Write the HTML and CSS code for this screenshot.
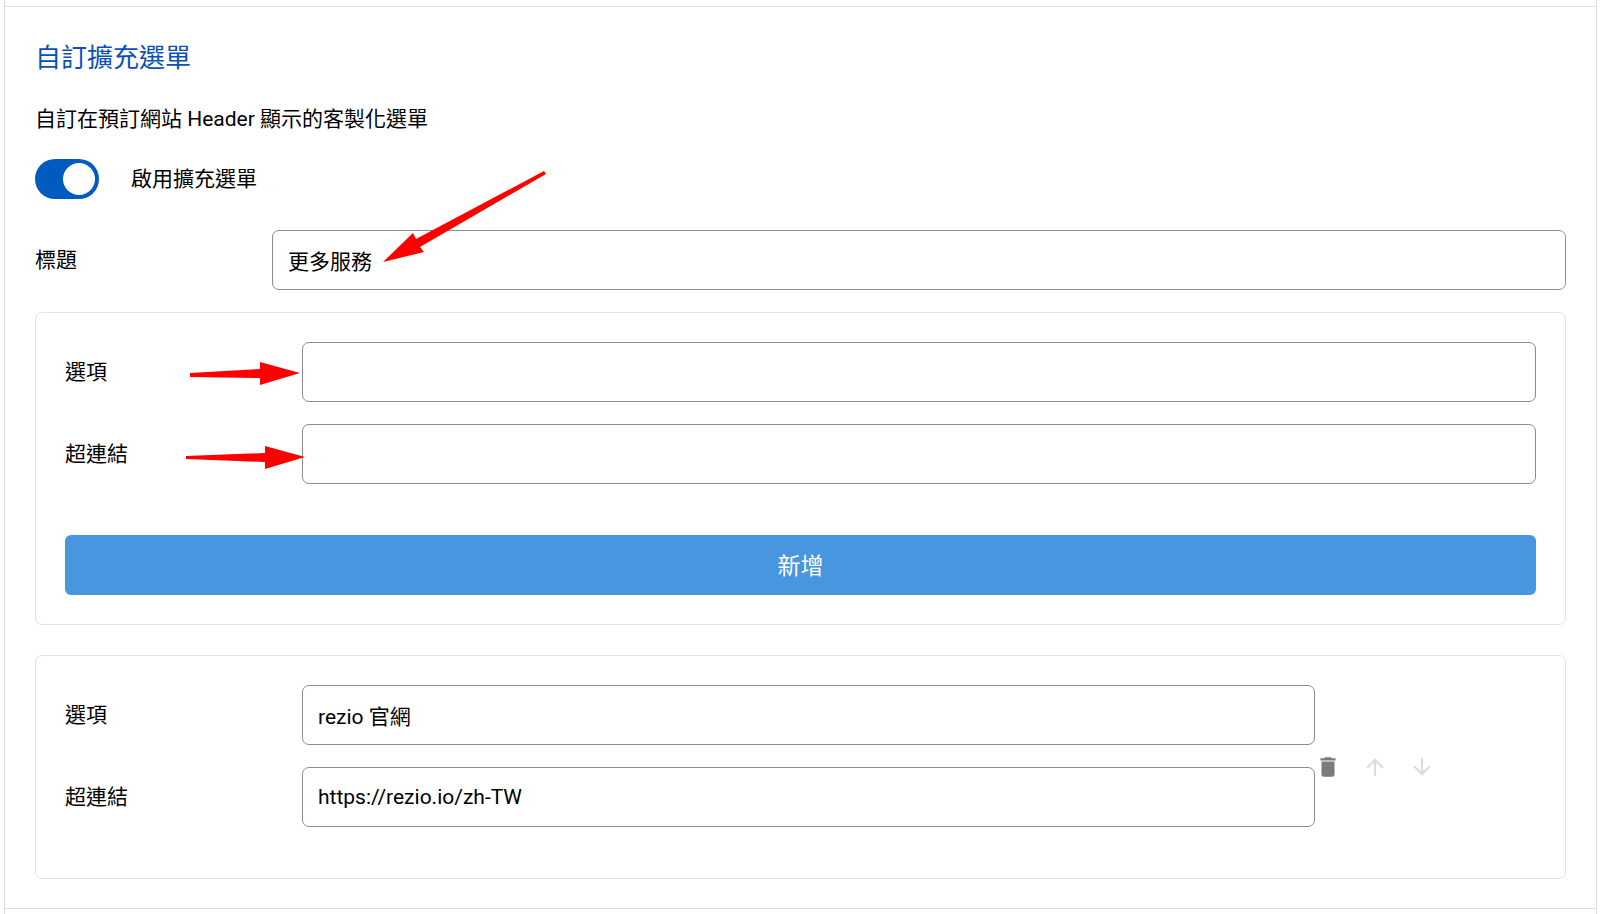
FILE: index.html
```
<!DOCTYPE html>
<html lang="zh-Hant-TW">
	<head>
		<meta charset="utf-8">
		<meta name="viewport" content="width=device-width, initial-scale=1">

		<title>自訂擴充選單</title>

		<link rel="stylesheet" href="styles.css">
	</head>
	<body>
	<main class="page">
		<section class="panel">
			<h2>自訂擴充選單</h2>
			<p class="intro">自訂在預訂網站 Header 顯示的客製化選單</p>

			<div class="toggle">
				<input type="checkbox" id="menu-enabled" class="switch" checked>
				<label for="menu-enabled">啟用擴充選單</label>
			</div>

			<div class="row">
				<label for="menu-title">標題</label>
				<input type="text" id="menu-title" value="更多服務">
				<svg class="pointer pointer-title" width="163" height="91" viewBox="0 0 163 91" aria-hidden="true">
					<path d="M0 91 L30 62 L33 68 L161 0 L163 3 L37 76 L41 81 Z"/>
				</svg>
			</div>

			<form class="card">
				<div class="row">
					<label for="new-option">選項</label>
					<input type="text" id="new-option">
					<svg class="pointer pointer-option" width="110" height="23" viewBox="0 0 110 23" aria-hidden="true">
						<path d="M110 11 L70 0 V7 L0 11 V15 L70 16 V23 Z"/>
					</svg>
				</div>
				<div class="row">
					<label for="new-link">超連結</label>
					<input type="text" id="new-link">
					<svg class="pointer pointer-link" width="119" height="23" viewBox="0 0 119 23" aria-hidden="true">
						<path d="M119 11 L79 0 V7 L0 10 V13 L79 16 V23 Z"/>
					</svg>
				</div>
				<button type="button" class="add">新增</button>
			</form>

			<div class="card item">
				<div class="fields">
					<div class="row">
						<label for="item-option">選項</label>
						<input type="text" id="item-option" value="rezio 官網">
					</div>
					<div class="row">
						<label for="item-link">超連結</label>
						<input type="text" id="item-link" value="https://rezio.io/zh-TW">
					</div>
				</div>
				<div class="actions">
					<button type="button" aria-label="刪除">
						<svg viewBox="0 0 24 24"><path d="M6 19c0 1.1.9 2 2 2h8c1.1 0 2-.9 2-2V7H6v12zM19 4h-3.500l-1-1h-5l-1 1H5v2h14V4z"/></svg>
					</button>
					<button type="button" aria-label="上移" disabled>
						<svg viewBox="0 0 24 24"><path d="M4 12l1.410 1.410L11 7.830V20h2V7.830l5.580 5.590L20 12l-8-8-8 8z"/></svg>
					</button>
					<button type="button" aria-label="下移" disabled>
						<svg viewBox="0 0 24 24"><path d="M20 12l-1.410-1.410L13 16.170V4h-2v12.170l-5.580-5.590L4 12l8 8 8-8z"/></svg>
					</button>
				</div>
			</div>
		</section>
	</main>
	</body>
</html>
```
FILE: styles.css
```
* {
	box-sizing: border-box;
}

body {
	margin: 0;
	background: #fff;
	color: #000;

	font-family: Roboto, "Noto Sans CJK TC", sans-serif;
	font-size: 21px;
	line-height: 30px;
}

input,
button {
	margin: 0;
	font: inherit;
	color: inherit;
}

.page {
	min-height: 100vh;
	margin: 0 3px 0 4px;
	padding-top: 6px;
	border: 1px solid #ddd;
	border-width: 0 1px;
}

.panel {
	padding: 31px 30px 29px;
	border: 1px solid #e2e2e2;
	border-width: 1px 0;
}

h2 {
	margin: 0 0 26px;
	color: #0b50b8;

	font-size: 26px;
	font-weight: normal;
	line-height: 40px;
}

.intro {
	margin: 0 0 25px;
}

.toggle {
	display: flex;
	align-items: center;
	gap: 32px;
	margin-bottom: 31px;
}

.switch {
	width: 64px;
	height: 40px;
	padding: 4px;

	background: #005abf;
	border-radius: 20px;

	-webkit-appearance: none;
	appearance: none;
	cursor: pointer;
}

.switch::before {
	content: "";
	display: block;
	width: 32px;
	height: 32px;

	background: #fff;
	border-radius: 50%;
}

.switch:checked::before {
	margin-left: auto;
}

.row {
	/* The pointers are placed against their row */
	position: relative;
	display: flex;
	align-items: center;
	margin-bottom: 22px;
}

.row label {
	flex: 0 0 237px;
}

.row input {
	flex: 1;
	min-width: 0;
	height: 60px;
	padding: 0 15px;

	background: #fff;
	border: 1px solid #8c8c8c;
	border-radius: 7px;
}

.card {
	padding: 29px;
	border: 1px solid #e2e2e2;
	border-radius: 7px;
}

.add {
	display: block;
	width: 100%;
	height: 60px;
	margin-top: 51px;
	padding: 4px 0 0;

	background: #4895e0;
	color: #fff;
	border: 0;
	border-radius: 6px;

	font-size: 23px;
	cursor: pointer;
}

.item {
	display: flex;
	align-items: center;
	margin-top: 30px;
}

.fields {
	flex: 0 0 85%;
}

.actions {
	display: flex;
	gap: 21px;
}

.actions button {
	width: 26px;
	height: 26px;
	padding: 0;

	background: none;
	border: 0;
	cursor: pointer;
}

.actions svg {
	display: block;
	fill: #7a7a7a;
}

.actions button:disabled {
	cursor: default;
}

.actions button:disabled svg {
	fill: #dcdcdc;
}

.pointer {
	position: absolute;
	fill: #f00;
	pointer-events: none;
}

.pointer-title {
	left: 348px;
	top: -59px;
}

.pointer-option {
	left: 125px;
	top: 20px;
}

.pointer-link {
	left: 121px;
	top: 22px;
}
```
